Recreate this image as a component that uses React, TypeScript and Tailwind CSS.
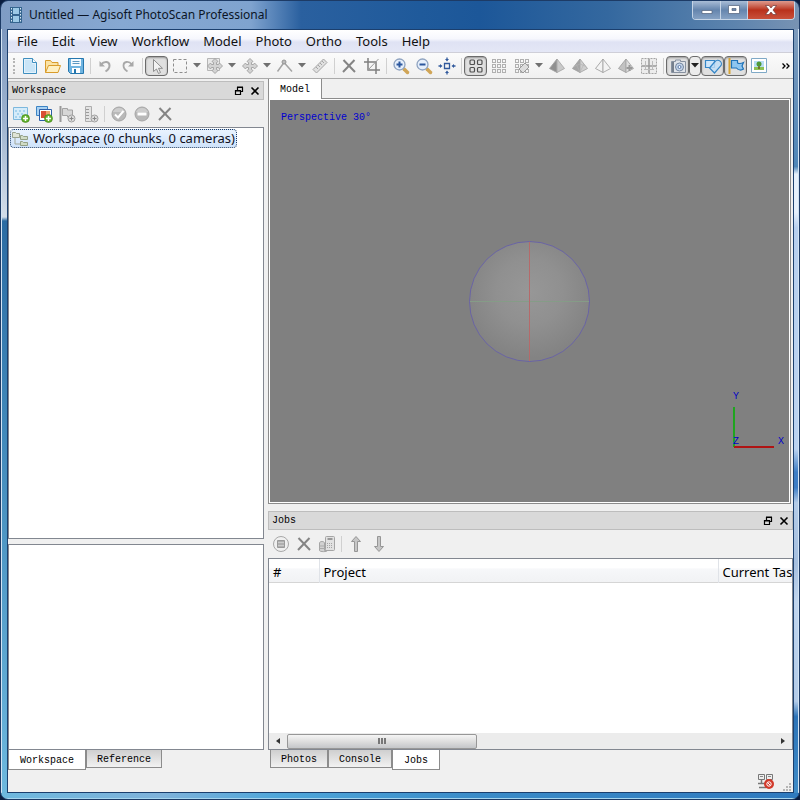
import React from 'react';
import clsx from 'clsx';

interface IconProps {
    children: React.ReactNode;
    size?: string;
}

const Icon: React.FC<IconProps> = ({ children, size = 'w-[18px] h-[18px]' }) => (
    <svg viewBox="0 0 18 18" className={clsx('shrink-0', size)} fill="none" aria-hidden="true">
        {children}
    </svg>
);

/* ---------- colour icons ---------- */

const NewIcon = () => (
    <Icon>
        <path d="M2.500 1.500h9l4 4v11h-13z" fill="#e4f2fb" stroke="#3f8fbf" />
        <path d="M4 3h7v4h3v8H4z" fill="#c9e5f7" />
        <path d="M11.500 1.500v4h4" fill="#fff" stroke="#3f8fbf" />
    </Icon>
);

const OpenIcon = () => (
    <Icon>
        <path d="M1.500 15.500V3.500h5l1.500 2h6v3" fill="#fbe3a4" stroke="#d99c2b" />
        <path d="M1.500 15.500l3-7h12l-2.500 7z" fill="#fff0c2" stroke="#d99c2b" />
    </Icon>
);

const SaveIcon = () => (
    <Icon>
        <path d="M1.500 1.500h15v15h-13l-2-2z" fill="#6fb4e0" stroke="#2577ae" />
        <path d="M4 2h10v7H4z" fill="#f3faff" />
        <path d="M5.500 4.500h7M5.500 6.500h7" stroke="#5a98c2" />
        <path d="M5 11h8v5H5z" fill="#fff" />
        <path d="M7 12h2v4H7z" fill="#2577ae" />
    </Icon>
);

const Plus = () => (
    <>
        <circle cx="13.500" cy="13.500" r="4" fill="#63b32e" stroke="#3f7f17" strokeWidth=".6" />
        <path d="M13.500 11v5M11 13.500h5" stroke="#fff" strokeWidth="1.500" />
    </>
);

const GrayPlus = () => (
    <>
        <circle cx="13.500" cy="13.500" r="3.500" fill="#ddd" stroke="#a0a0a0" />
        <path d="M13.500 11.500v4M11.500 13.500h4" stroke="#888" />
    </>
);

const AddPhotoIcon = () => (
    <Icon>
        <path d="M1.500 2.500h14v12h-14z" fill="#d5ecfa" stroke="#7db8dd" />
        <path d="M3 5h2v2H3zM7 5h2v2H7zM11 5h2v2h-2zM5 8h2v2H5zM9 8h2v2H9zM3 11h2v2H3zM7 11h2v2H7z" fill="#a5d3ee" />
        <Plus />
    </Icon>
);

const AddChunkIcon = () => (
    <Icon>
        <path d="M1.500 1.500h11v9h-11z" fill="#a9d2f2" stroke="#3d84c4" />
        <path d="M4.500 4.500h12v11h-12z" fill="#fff" stroke="#2d5fa8" />
        <path d="M6 6h7v7H6z" fill="#d94f35" />
        <path d="M11 6h4v4h-4z" fill="#f0a36b" />
        <Plus />
    </Icon>
);

/* ---------- disabled icons ---------- */

const AddMarkerIcon = () => (
    <Icon>
        <path d="M2.500 1v16" stroke="#9a9a9a" strokeWidth="2" />
        <path d="M4.500 3.500h5v1.500h5v7h-5v-1.500h-5z" fill="#d6d6d6" stroke="#a3a3a3" />
        <GrayPlus />
    </Icon>
);

const AddScaleIcon = () => (
    <Icon>
        <path d="M4.500 1.500h6v15h-6z" fill="#e3e3e3" stroke="#adadad" />
        <path d="M5 4.500h3M5 7.500h3M5 10.500h3M5 13.500h3" stroke="#9b9b9b" />
        <GrayPlus />
    </Icon>
);

const EnableIcon = () => (
    <Icon>
        <circle cx="9" cy="9" r="7" fill="#b9b9b9" stroke="#a5a5a5" />
        <path d="M3 7a6.500 6.500 0 0 1 12 0z" fill="#cdcdcd" />
        <path d="M5 9.500l3 3 5.500-6.500" stroke="#fff" strokeWidth="2" />
    </Icon>
);

const DisableIcon = () => (
    <Icon>
        <circle cx="9" cy="9" r="7" fill="#b9b9b9" stroke="#a5a5a5" />
        <path d="M3 7a6.500 6.500 0 0 1 12 0z" fill="#cdcdcd" />
        <path d="M4.500 7.500h9v3h-9z" fill="#fff" />
    </Icon>
);

const RemoveIcon = () => (
    <Icon>
        <path d="M3.500 3l11.500 12M14.500 3L3 15" stroke="#858585" strokeWidth="2" />
    </Icon>
);

const UndoIcon = () => (
    <Icon>
        <path d="M5 7.500C8.500 3.500 13.500 4.500 13.500 8.500c0 2.500-1.500 4.500-4 6" stroke="#a8a8a8" strokeWidth="2" />
        <path d="M3.500 4v5.500h5.500z" fill="#a8a8a8" />
    </Icon>
);

const RedoIcon = () => (
    <Icon>
        <path d="M13 7.500C9.500 3.500 4.500 4.500 4.500 8.500c0 2.500 1.500 4.500 4 6" stroke="#a8a8a8" strokeWidth="1.800" />
        <path d="M14.500 4v5.500H9z" fill="#a8a8a8" />
    </Icon>
);

const CursorIcon = () => (
    <Icon>
        <path d="M5.500 2.500v12l3-2.500 2 4.500 2-1-2-4.200h4z" fill="#f2f2f2" stroke="#8d8d8d" />
    </Icon>
);

const RectSelectIcon = () => (
    <Icon>
        <path d="M2.500 2.500h13v13h-13z" stroke="#8e8e8e" strokeDasharray="3 2" />
    </Icon>
);

const MoveShape = () => (
    <path
        d="M9 1.500l3 3-1.500 1v2h2l1-1.500 3 3-3 3-1-1.500h-2v2l1.500 1-3 3-3-3 1.500-1v-2h-2l-1 1.500-3-3 3-3 1 1.500h2v-2L6 4.500z"
        fill="#d3d3d3"
        stroke="#9f9f9f"
        strokeWidth=".9"
    />
);

const MoveRegionIcon = () => (
    <Icon>
        <path d="M1.500 1.500h12v12h-12z" fill="#e9e9e9" stroke="#b5b5b5" />
        <MoveShape />
    </Icon>
);

const MoveIcon = () => (
    <Icon>
        <MoveShape />
    </Icon>
);

const PolylineIcon = () => (
    <Icon>
        <path d="M1.500 14.500L8 5.500l8 9" stroke="#a5a5a5" strokeWidth="1.500" />
        <circle cx="8" cy="5" r="2" fill="#bbb" stroke="#959595" />
    </Icon>
);

const RulerIcon = () => (
    <Icon>
        <path d="M2 12.500L12.500 2 16 5.500 5.500 16z" fill="#e0e0e0" stroke="#a5a5a5" />
        <path d="M5 10l2 2M7 8l2 2M9 6l2 2M11 4l2 2" stroke="#a5a5a5" />
    </Icon>
);

const CropIcon = () => (
    <Icon>
        <path d="M5 1v12h12M1 5h12v12" stroke="#7f7f7f" strokeWidth="1.500" />
        <path d="M15.500 2L5 13" stroke="#9b9b9b" />
    </Icon>
);

const ZoomIcon: React.FC<{ plus?: boolean }> = ({ plus }) => (
    <Icon>
        <path d="M12 12l3.500 3.500" stroke="#d0a557" strokeWidth="3.500" strokeLinecap="round" />
        <circle cx="7.500" cy="7.500" r="5.500" fill="#e6effb" stroke="#8fa3c0" strokeWidth="1.300" />
        <path d={plus ? 'M4.500 7.500h6M7.500 4.500v6' : 'M4.500 7.500h6'} stroke="#2b579e" strokeWidth="2" />
    </Icon>
);

const FitIcon = () => (
    <Icon>
        <path d="M6.500 6.500h5v5h-5z" stroke="#31599c" strokeWidth="1.300" />
        <path
            d="M7 2h4L9 4.500zM7 16h4L9 13.500zM2 7v4L4.500 9zM16 7v4L13.500 9z"
            fill="#31599c"
        />
        <path d="M9 .5v2M9 15.500v2M.5 9h2M15.500 9h2" stroke="#31599c" strokeWidth="1.300" />
    </Icon>
);

const PointsIcon = () => (
    <Icon>
        <g stroke="#4f4f4f" strokeWidth="1.200">
            <rect x="3" y="3" width="4.500" height="4.500" rx="1" />
            <rect x="10.500" y="3" width="4.500" height="4.500" rx="1" />
            <rect x="3" y="10.500" width="4.500" height="4.500" rx="1" />
            <rect x="10.500" y="10.500" width="4.500" height="4.500" rx="1" />
        </g>
    </Icon>
);

const DenseIcon: React.FC<{ classes?: boolean }> = ({ classes }) => (
    <Icon>
        {[2, 7, 12].map(y =>
            [2, 7, 12].map(x => (
                <rect key={`${x}-${y}`} x={x + .5} y={y + .5} width="3" height="3" stroke="#b0b0b0" />
            ))
        )}
        {classes && <path d="M6 12l6-6 4 4-6 6z" fill="#dcdcdc" stroke="#999" />}
    </Icon>
);

interface PyramidProps {
    left: string;
    right: string;
    lines?: boolean;
    plus?: boolean;
}

const PyramidIcon: React.FC<PyramidProps> = ({ left, right, lines, plus }) => (
    <Icon>
        <path d="M9 2L1.500 11.500 9 15.500z" fill={left} stroke="#a2a2a2" strokeWidth=".9" />
        <path d="M9 2l7.500 9.500L9 15.500z" fill={right} stroke="#a8a8a8" strokeWidth=".9" />
        {lines && <path d="M5 7l4 8M13 7l-4 8M3 9.500L9 7l6 2.500" stroke="#b5b5b5" strokeWidth=".7" />}
        {plus && <path d="M12.500 8v6M9.500 11h6" stroke="#999" strokeWidth="2" />}
    </Icon>
);

const TiledIcon = () => (
    <Icon>
        <path d="M1.500 1.500h15v15h-15z" fill="#ececec" stroke="#a5a5a5" strokeDasharray="2 1" />
        <path d="M9 2v14M2 9h14" stroke="#999" strokeWidth="1.500" />
        <path d="M5.500 4v9M12.500 4v9M4 12.500h10" stroke="#bbb" />
    </Icon>
);

const CameraIcon = () => (
    <Icon>
        <path d="M2.500 4.500h4v-1.500h5v1.500h5v11h-14z" fill="#dfe3e9" stroke="#8791a0" />
        <path d="M3 5h2v10H3z" fill="#757f8c" />
        <circle cx="10.500" cy="10" r="4" fill="#c5d5ea" stroke="#74869f" />
        <circle cx="10.500" cy="10" r="1.500" fill="#f5f9ff" stroke="#5b78a5" />
    </Icon>
);

const ShapesIcon = () => (
    <Icon>
        <path d="M1.500 3.500h9v7h-9z" fill="#cfe6fa" stroke="#3686c6" strokeWidth="1.200" />
        <path
            d="M5.500 11l5.500-6.500a3.600 3.600 0 0 1 5.500 4.700L10.500 16z"
            fill="#c0def7"
            fillOpacity=".8"
            stroke="#3686c6"
            strokeWidth="1.200"
        />
    </Icon>
);

const FlagIcon = () => (
    <Icon>
        <path d="M2.500 1v16" stroke="#d6a436" strokeWidth="2" />
        <path d="M4.500 3.500h6V6c2 1 4 .5 6-.5L15 9l1.500 3c-2 1.500-5 1.500-7-1h-5z" fill="#8ec6f0" stroke="#1f73b8" strokeWidth="1.200" />
    </Icon>
);

const ThumbIcon = () => (
    <Icon>
        <path d="M1.500 1.500h15v14h-15z" fill="#fff" stroke="#7fa9c6" />
        <path d="M4 4h10v6H4z" fill="#b9dff5" />
        <path d="M4 10h10v3H4z" fill="#8cc152" />
        <path d="M9 8v4" stroke="#6c5326" strokeWidth="1.500" />
        <circle cx="9" cy="7" r="2.500" fill="#4f9a36" />
    </Icon>
);

const StopIcon = () => (
    <Icon>
        <circle cx="9" cy="9" r="7.500" fill="#f0f0f0" stroke="#a8a8a8" />
        <path d="M5.500 5.500h7v7h-7z" fill="#b0b0b0" stroke="#9a9a9a" />
        <path d="M6 7.500h6M6 10.500h6" stroke="#ccc" />
    </Icon>
);

const QueueIcon = () => (
    <Icon>
        <rect x="7.500" y="1.500" width="9" height="14" rx="1" fill="#e2e2e2" stroke="#a5a5a5" />
        <path d="M9.500 4h5" stroke="#999" strokeWidth="2" />
        <path d="M9 8.500h6M9 10.500h6M9 12.500h6" stroke="#a5a5a5" strokeDasharray="1 1" />
        <path d="M1.500 8c0-2 5-2 5 0v7.500h3c0 1.500-8 1.500-8 0z" fill="#d2d2d2" stroke="#a5a5a5" />
        <path d="M1.500 11h5M1.500 13.500h6" stroke="#aaa" />
    </Icon>
);

const ArrowIcon: React.FC<{ down?: boolean }> = ({ down }) => (
    <Icon>
        <path
            d={down ? 'M7.500 1.500h3v10h3L9 16.500l-4.500-5h3z' : 'M7.500 16.500h3v-10h3L9 1.500l-4.500 5h3z'}
            fill="#c6c6c6"
            stroke="#969696"
        />
    </Icon>
);

const TreeIcon = () => (
    <Icon>
        <path d="M4 7v7h5M4 7h6" stroke="#a3a99a" />
        <path d="M1.500 2.500h3l1 1h3v4h-7z" fill="#dfe4d7" stroke="#9aa390" />
        <path d="M9.500 5.500h2l1 1h4v3h-7zM9.500 11.500h2l1 1h4v3h-7z" fill="#d0dcc6" stroke="#94a087" />
    </Icon>
);

const FilmIcon = () => (
    <Icon>
        <path d="M3 1h12v16H3z" fill="#35658f" />
        <path d="M6 2h6v6H6zM6 10h6v6H6z" fill="#9cc9e6" />
        <path d="M4.500 2v14M13.500 2v14" stroke="#d7e8f5" strokeDasharray="1.500 1.500" />
    </Icon>
);

const NetworkIcon = () => (
    <Icon>
        <path d="M1.500 2.500h6v5h-6zM9.500 2.500h6v5h-6z" fill="#eee" stroke="#777" />
        <path d="M3 4.500h3M11 4.500h3" stroke="#888" />
        <path d="M4.500 8v3M1 11.500h9M2 15.500h7" stroke="#777" strokeWidth="1.500" />
        <circle cx="12" cy="12" r="5" fill="#d23a2b" />
        <circle cx="12" cy="12" r="2.200" stroke="#fff" />
        <path d="M10.500 10.500l3 3" stroke="#fff" />
    </Icon>
);

const FloatIcon = () => (
    <svg viewBox="0 0 10 10" className="w-[10px] h-[10px]" fill="none" stroke="#000" aria-hidden="true">
        <path d="M3.500 4V1.500h5v4H6.500M3 1h6" strokeWidth="1.200" />
        <path d="M1.500 4.500h5v4h-5zM1 5h6" strokeWidth="1.200" />
    </svg>
);

const CloseIcon = () => (
    <svg viewBox="0 0 10 10" className="w-[10px] h-[10px]" fill="none" stroke="#000" strokeWidth="1.600" aria-hidden="true">
        <path d="M1.500 1.500l7 7M8.500 1.500l-7 7" />
    </svg>
);

/* ---------- controls ---------- */

interface ToolButtonProps {
    label: string;
    children: React.ReactNode;
    active?: boolean;
}

const ToolButton: React.FC<ToolButtonProps> = ({ label, children, active }) => (
    <button
        type="button"
        aria-label={label}
        className={clsx(
            'flex items-center justify-center w-[23px] h-5 shrink-0',
            active && 'rounded-sm border border-[#6b6b6b] bg-[#e0e0e0] shadow-[inset_0_1px_2px_#9a9a9a]'
        )}
    >
        {children}
    </button>
);

const MenuArrow: React.FC<{ label: string; active?: boolean }> = ({ label, active }) => (
    <button
        type="button"
        aria-label={label}
        className={clsx(
            'flex items-center justify-center w-3 h-5 shrink-0',
            active && 'rounded-sm border border-[#6b6b6b] bg-[#ececec]'
        )}
    >
        <svg viewBox="0 0 8 5" className="w-2 h-[5px] shrink-0" aria-hidden="true">
            <path d="M0 0h8L4 4.500z" fill={active ? '#222' : '#707070'} />
        </svg>
    </button>
);

const Separator = () => (
    <div className="flex justify-center w-[6px] shrink-0">
        <div className="w-px h-4 bg-[#d0d0d0]" />
    </div>
);

const DockHeader: React.FC<{ title: string }> = ({ title }) => (
    <header className="flex items-center h-[19px] px-[3px] gap-[6px] border border-[#bdbdbd] bg-[#d9d9d9] font-['Liberation_Mono',monospace] text-[10px] text-black">
        <h2 className="flex-1">{title}</h2>
        <button type="button" aria-label={`Float ${title}`}><FloatIcon /></button>
        <button type="button" aria-label={`Close ${title}`}><CloseIcon /></button>
    </header>
);

const DockTabs: React.FC<{ tabs: string[]; current: string }> = ({ tabs, current }) => (
    <nav className="flex items-start h-5 font-['Liberation_Mono',monospace] text-[10px] text-black">
        {tabs.map(tab => (
            <button
                type="button"
                key={tab}
                className={clsx(
                    'pt-[2px] border border-t-0 border-[#8c8c8c]',
                    tab === current ? 'h-5 px-[11px] bg-white' : 'h-[18px] px-[10px] bg-linear-to-b from-[#cfcfcf] to-[#f2f2f2]'
                )}
            >
                {tab}
            </button>
        ))}
    </nav>
);

/* ---------- page parts ---------- */

const menus = ['File', 'Edit', 'View', 'Workflow', 'Model', 'Photo', 'Ortho', 'Tools', 'Help'];

const TitleBar = () => (
    <header className="flex items-start h-7 pl-[6px] pr-1 bg-[linear-gradient(90deg,#7f9cc4_0,#86a8d2_120px,#7fa3cf_250px,#2a609f_300px,#1f5a9b_420px,#1c5799_60%,#34689f_76%,#5d84ae_92%,#7893b3_100%)]">
        <div className="flex items-center gap-1 h-7 flex-1">
            <FilmIcon />
            <h1 className="text-[12px] text-[#0b1526] whitespace-nowrap">Untitled — Agisoft PhotoScan Professional</h1>
        </div>
        <div className="flex h-[19px] rounded-b border border-t-0 border-[#c5d4e6] overflow-hidden">
            <button type="button" aria-label="Minimize" className="flex items-center justify-center w-7 border-r border-[#c5d4e6] bg-linear-to-b from-[#a9bdd6] via-[#6585ad] via-50% to-[#86a2c4]">
                <svg viewBox="0 0 12 10" className="w-3 h-[10px]" aria-hidden="true">
                    <path d="M1 5.500h10v3H1z" fill="#fff" stroke="#50607a" strokeWidth=".7" />
                </svg>
            </button>
            <button type="button" aria-label="Maximize" className="flex items-center justify-center w-[27px] border-r border-[#c5d4e6] bg-linear-to-b from-[#a9bdd6] via-[#6585ad] via-50% to-[#86a2c4]">
                <svg viewBox="0 0 12 10" className="w-3 h-[10px]" aria-hidden="true">
                    <path d="M.5.5h11v8H.5zM4 3.500v2h4v-2z" fill="#fff" fillRule="evenodd" stroke="#50607a" strokeWidth=".7" />
                </svg>
            </button>
            <button type="button" aria-label="Close" className="flex items-center justify-center w-[46px] bg-linear-to-b from-[#dc9a8e] via-[#b9301b] via-50% to-[#c9503a]">
                <svg viewBox="0 0 12 10" className="w-3 h-[10px]" aria-hidden="true">
                    <path d="M.5.5h3.500L6 3 8 .5h3.500L8 5l3.500 4.500H8L6 7 4 9.500H.5L4 5z" fill="#fff" stroke="#6b3a3a" strokeWidth=".7" />
                </svg>
            </button>
        </div>
    </header>
);

const MenuBar = () => (
    <nav className="flex items-center gap-[14px] h-[23px] pt-px px-[9px] border-b border-[#cfcfd8] bg-[linear-gradient(180deg,#ffffff_0,#f6f7fd_40%,#dfe2f4_55%,#e4e7f6_100%)] text-[13px] text-[#111]">
        {menus.map(menu => (
            <button type="button" key={menu}>{menu}</button>
        ))}
    </nav>
);

const MainToolbar = () => (
    <div className="flex items-center h-[26px] border-b border-[#a9a9a9] bg-linear-to-b from-[#fbfbfb] to-[#f0f0f0] overflow-hidden">
        <div className="flex justify-center w-2 shrink-0 ml-[2px]">
            <div className="h-4 border-l-2 border-dotted border-[#b5b5b5]" />
        </div>
        <ToolButton label="New"><NewIcon /></ToolButton>
        <ToolButton label="Open"><OpenIcon /></ToolButton>
        <ToolButton label="Save"><SaveIcon /></ToolButton>
        <Separator />
        <ToolButton label="Undo"><UndoIcon /></ToolButton>
        <ToolButton label="Redo"><RedoIcon /></ToolButton>
        <Separator />
        <ToolButton label="Navigation" active><CursorIcon /></ToolButton>
        <ToolButton label="Rectangle selection"><RectSelectIcon /></ToolButton>
        <MenuArrow label="Selection modes" />
        <ToolButton label="Move region"><MoveRegionIcon /></ToolButton>
        <MenuArrow label="Region modes" />
        <ToolButton label="Move object"><MoveIcon /></ToolButton>
        <MenuArrow label="Object modes" />
        <ToolButton label="Draw polyline"><PolylineIcon /></ToolButton>
        <MenuArrow label="Drawing modes" />
        <ToolButton label="Ruler"><RulerIcon /></ToolButton>
        <Separator />
        <ToolButton label="Delete selection"><RemoveIcon /></ToolButton>
        <ToolButton label="Crop selection"><CropIcon /></ToolButton>
        <Separator />
        <ToolButton label="Zoom in"><ZoomIcon plus /></ToolButton>
        <ToolButton label="Zoom out"><ZoomIcon /></ToolButton>
        <ToolButton label="Reset view"><FitIcon /></ToolButton>
        <Separator />
        <ToolButton label="Point cloud" active><PointsIcon /></ToolButton>
        <ToolButton label="Dense cloud"><DenseIcon /></ToolButton>
        <ToolButton label="Dense cloud classes"><DenseIcon classes /></ToolButton>
        <MenuArrow label="Dense cloud modes" />
        <ToolButton label="Shaded"><PyramidIcon left="#8f8f8f" right="#c9c9c9" /></ToolButton>
        <ToolButton label="Solid"><PyramidIcon left="#a5a5a5" right="#cfcfcf" lines /></ToolButton>
        <ToolButton label="Wireframe"><PyramidIcon left="#f3f3f3" right="#f3f3f3" /></ToolButton>
        <ToolButton label="Textured"><PyramidIcon left="#c2c2c2" right="#dddddd" plus /></ToolButton>
        <ToolButton label="Tiled model"><TiledIcon /></ToolButton>
        <Separator />
        <ToolButton label="Show cameras" active><CameraIcon /></ToolButton>
        <MenuArrow label="Camera options" active />
        <ToolButton label="Show shapes" active><ShapesIcon /></ToolButton>
        <ToolButton label="Show markers" active><FlagIcon /></ToolButton>
        <ToolButton label="Show thumbnails"><ThumbIcon /></ToolButton>
        <button type="button" aria-label="More tools" className="ml-auto mr-[3px]">
            <svg viewBox="0 0 8 6" className="w-2 h-[6px]" fill="none" stroke="#000" strokeWidth="1.300" aria-hidden="true">
                <path d="M.5.5L3 3 .5 5.500M4.500.5L7 3 4.500 5.500" />
            </svg>
        </button>
    </div>
);

const WorkspacePane = () => (
    <aside className="flex flex-col w-64 shrink-0 pt-[2px]">
        <DockHeader title="Workspace" />
        <div className="flex items-center h-[27px] pl-px">
            <ToolButton label="Add photos"><AddPhotoIcon /></ToolButton>
            <ToolButton label="Add chunk"><AddChunkIcon /></ToolButton>
            <ToolButton label="Add marker"><AddMarkerIcon /></ToolButton>
            <ToolButton label="Add scale bar"><AddScaleIcon /></ToolButton>
            <Separator />
            <ToolButton label="Enable"><EnableIcon /></ToolButton>
            <ToolButton label="Disable"><DisableIcon /></ToolButton>
            <ToolButton label="Remove"><RemoveIcon /></ToolButton>
        </div>
        <div className="flex-1 p-px border border-[#828790] bg-white">
            <button type="button" className="flex items-center gap-1 h-[19px] pr-px rounded-sm border border-dotted border-[#1b3a63] bg-linear-to-b from-[#e9f3fe] to-[#cfe3fb] text-[13px] text-[#10101c] whitespace-nowrap">
                <TreeIcon />
                Workspace (0 chunks, 0 cameras)
            </button>
        </div>
        <div className="h-[206px] mt-[5px] border border-[#828790] bg-white" />
        <DockTabs tabs={['Workspace', 'Reference']} current="Workspace" />
    </aside>
);

const ModelView = () => (
    <section className="flex flex-col flex-1 pr-[2px]">
        <div className="flex items-end h-5">
            <button type="button" className="h-5 px-[11px] border-x border-[#8c8c8c] bg-white font-['Liberation_Mono',monospace] text-[10px] text-black">Model</button>
            <div className="flex-1 border-b border-[#8c8c8c]" />
        </div>
        <div className="flex flex-col flex-1 border border-t-0 border-[#8c8c8c] bg-white p-px">
            <div className="relative flex items-center justify-center flex-1 bg-[#808080]">
                <p className="absolute left-[11px] top-[10px] font-['Liberation_Mono',monospace] text-[10px] text-[#0000d0]">Perspective 30°</p>
                <svg viewBox="0 0 125 125" className="w-[125px] h-[125px]" fill="none" aria-hidden="true">
                    <defs>
                        <radialGradient id="ball" cx=".5" cy=".42" r=".55">
                            <stop offset="0" stopColor="#979797" />
                            <stop offset=".5" stopColor="#909090" />
                            <stop offset="1" stopColor="#838383" />
                        </radialGradient>
                    </defs>
                    <circle cx="62.500" cy="62.500" r="60" fill="url(#ball)" stroke="#6660a8" strokeWidth=".9" />
                    <path d="M3 62h119v1H3z" fill="#859c87" shapeRendering="crispEdges" />
                    <path d="M62 3h1v119h-1z" fill="#b56a6a" shapeRendering="crispEdges" />
                </svg>
                <svg viewBox="0 0 60 68" className="absolute right-0 bottom-12 w-[60px] h-[68px] font-['Liberation_Mono',monospace] text-[10px]" role="img" aria-label="Axes">
                    <path d="M4 21h2v40H4z" fill="#1fa51f" />
                    <path d="M5 60h40v2H5z" fill="#b01414" />
                    <g fill="#0000c8">
                        <text x="4" y="13">Y</text>
                        <text x="4" y="58">Z</text>
                        <text x="49" y="58">X</text>
                    </g>
                </svg>
            </div>
        </div>
    </section>
);

const JobsPane = () => (
    <section className="flex flex-col pt-[7px]">
        <DockHeader title="Jobs" />
        <div className="flex items-center h-7 pl-px">
            <ToolButton label="Stop job"><StopIcon /></ToolButton>
            <ToolButton label="Remove job"><RemoveIcon /></ToolButton>
            <ToolButton label="Process queue"><QueueIcon /></ToolButton>
            <Separator />
            <ToolButton label="Move up"><ArrowIcon /></ToolButton>
            <ToolButton label="Move down"><ArrowIcon down /></ToolButton>
        </div>
        <div className="flex flex-col h-48 border border-[#828790] bg-white overflow-hidden">
            <div className="flex-1 overflow-hidden">
                <table className="table-fixed w-full border-collapse text-[13px] leading-5 text-black">
                    <thead>
                        <tr className="border-b border-[#d5d5d5] bg-[linear-gradient(180deg,#ffffff_0,#ffffff_40%,#f7f8fa_42%,#f1f2f4_100%)] text-left whitespace-nowrap">
                            <th className="w-[50px] pt-[3px] pl-1 font-normal border-r border-[#e0e3e8]">#</th>
                            <th className="pt-[3px] pl-1 font-normal border-r border-[#e0e3e8]">Project</th>
                            <th className="w-[74px] pt-[3px] pl-1 font-normal">Current Task</th>
                        </tr>
                    </thead>
                </table>
            </div>
            <div className="flex items-center h-4 bg-[#ececec]">
                <button type="button" aria-label="Scroll left" className="flex items-center justify-center w-[18px] h-4">
                    <svg viewBox="0 0 4 6" className="w-1 h-[6px]" aria-hidden="true"><path d="M4 0v6L0 3z" fill="#333" /></svg>
                </button>
                <div className="flex-1">
                    <div className="flex items-center justify-center gap-px w-[39%] h-[15px] border border-[#979797] rounded-xs bg-linear-to-b from-[#f5f5f5] via-[#dedede] to-[#c4c6c9]">
                        <span className="w-[2px] h-[6px] bg-[#777]" />
                        <span className="w-[2px] h-[6px] bg-[#777]" />
                        <span className="w-[2px] h-[6px] bg-[#777]" />
                    </div>
                </div>
                <button type="button" aria-label="Scroll right" className="flex items-center justify-center w-[18px] h-4">
                    <svg viewBox="0 0 4 6" className="w-1 h-[6px]" aria-hidden="true"><path d="M0 0v6l4-3z" fill="#333" /></svg>
                </button>
            </div>
        </div>
        <div className="pl-[2px]">
            <DockTabs tabs={['Photos', 'Console', 'Jobs']} current="Jobs" />
        </div>
    </section>
);

const StatusBar = () => (
    <footer className="flex items-center justify-end gap-2 h-[22px] pr-px">
        <NetworkIcon />
        <svg viewBox="0 0 9 9" className="w-[9px] h-[9px] self-end" fill="#b5b5b5" aria-hidden="true">
            <path d="M6 0h2v2H6zM3 3h2v2H3zM6 3h2v2H6zM0 6h2v2H0zM3 6h2v2H3zM6 6h2v2H6z" />
        </svg>
    </footer>
);

export default function App() {
    return (
        <div className="flex flex-col min-h-screen bg-[#0a1d3f] font-['Noto_Sans',sans-serif]">
            <div className="flex flex-col flex-1 rounded-lg border border-[#1d3b66] overflow-hidden">
                <TitleBar />
                <div className="flex flex-1">
                    <div className="w-[6px] shrink-0 border-l border-[#d3e3f3] bg-[linear-gradient(180deg,#7d98bf_0,#9db3cf_90px,#d3dde9_188px,#2c6ca3_192px,#3f86b8_50%,#6db8de_100%)]" />
                    <main className="flex flex-col flex-1 min-w-0 border border-[#1b3f6e] bg-[#f0f0f0]">
                        <MenuBar />
                        <MainToolbar />
                        <div className="flex flex-1 gap-1">
                            <WorkspacePane />
                            <div className="flex flex-col flex-1 min-w-0">
                                <ModelView />
                                <JobsPane />
                            </div>
                        </div>
                        <StatusBar />
                    </main>
                    <div className="w-[5px] shrink-0 border-r border-[#d3e3f3] bg-[linear-gradient(180deg,#7f9cbd_0,#4f86b8_18%,#e6f0fb_19%,#e6f0fb_24%,#b7cfee_26%,#bcd3f0_55%,#3d7dc5_58%,#3d7dc5_60%,#b3cbe8_62%,#a5bfdf_70%,#c0d5ee_75%,#b3cbe8_88%,#2d74b8_90%,#3f8cc8_100%)]" />
                </div>
                <div className="h-[6px] border-b border-[#a5d5ee] bg-[linear-gradient(90deg,#6db8de_0,#7fb2da_20%,#4ea6da_35%,#3a8bc8_60%,#2f7abf_100%)]" />
            </div>
        </div>
    );
}
